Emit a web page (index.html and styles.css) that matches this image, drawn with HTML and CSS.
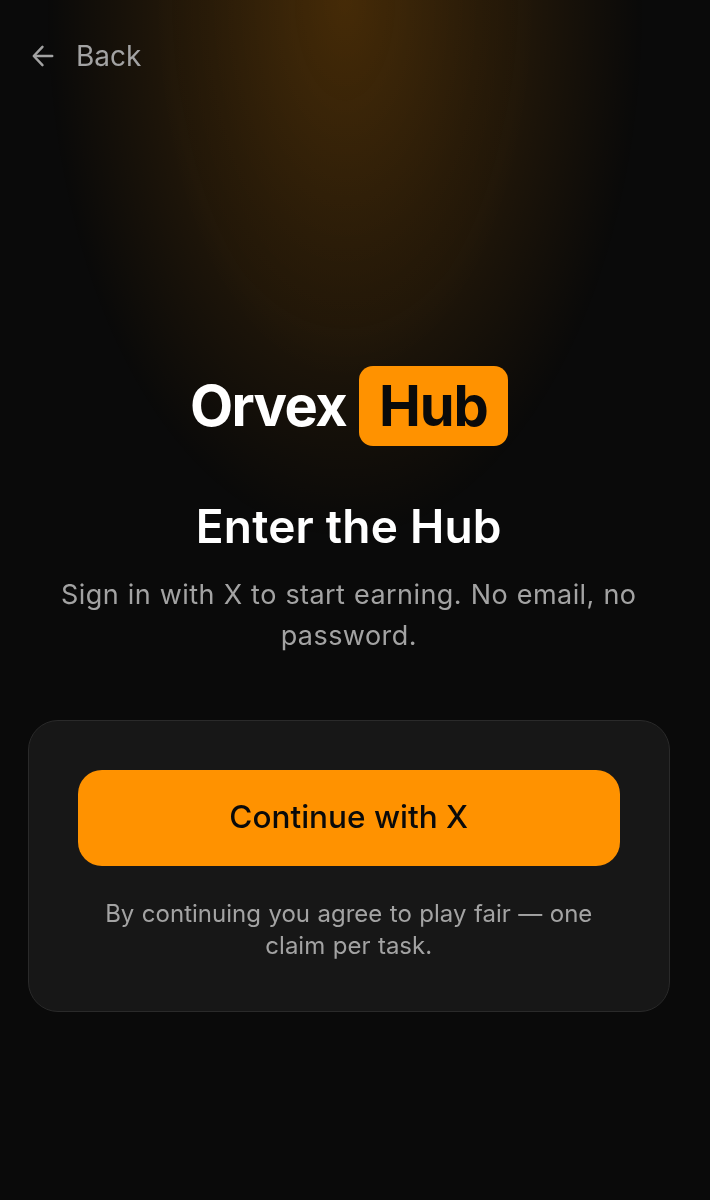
FILE: index.html
```html
<!DOCTYPE html>
<html lang="en">
<head>
<meta charset="utf-8">
<title>Orvex Hub</title>
<link rel="stylesheet" href="styles.css">
</head>
<body>
<main class="page">
  <a class="back" href="#">
    <svg class="back-icon" viewBox="0 0 24 24" width="26" height="26" fill="none" stroke="currentColor" stroke-width="2.300" stroke-linecap="round" stroke-linejoin="round"><path d="M20.500 12H4"/><path d="M11.500 3.500 3.500 12l8 8.500"/></svg>
    <span>Back</span>
  </a>
  <div class="logo">
    <span class="logo-word">Orvex</span>
    <span class="logo-badge">Hub</span>
  </div>
  <h1 class="title">Enter the Hub</h1>
  <p class="subtitle">Sign in with X to start earning. No email, no password.</p>
  <section class="card">
    <button class="cta" type="button">Continue with X</button>
    <p class="note">By continuing you agree to play fair — one claim per task.</p>
  </section>
</main>
</body>
</html>
```
FILE: styles.css
```css
* { box-sizing: border-box; }
html, body { margin: 0; height: 100%; }
body {
  background: #0a0a0a;
  font-family: Inter, "Liberation Sans", sans-serif;
  overflow: hidden;
}
.page {
  height: 1200px;
  padding: 36px 40.500px 0 28px;
  display: flex;
  flex-direction: column;
  will-change: opacity;
  background:
    radial-gradient(ellipse 190px 380px at 345px 0, rgba(255,146,0,.12) 0%, rgba(255,146,0,.03) 70%, rgba(255,146,0,0) 100%),
    radial-gradient(ellipse 300px 540px at 345px 0, rgba(255,146,0,.14) 0%, rgba(255,146,0,.09) 60%, rgba(255,146,0,0) 100%);
}
.back {
  display: flex;
  align-items: center;
  gap: 20px;
  height: 40px;
  color: #a3a3a3;
  font-size: 28px;
  text-decoration: none;
  align-self: flex-start;
  line-height: 42px;
}
.back-icon { flex: none; margin-left: 2px; }
.logo {
  margin-top: 290px;
  display: flex;
  justify-content: center;
  align-items: center;
  gap: 13px;
  font-weight: 700;
  font-size: 56px;
  line-height: 1;
}
.logo-word { color: #fff; letter-spacing: -1.600px; }
.logo-badge {
  background: #ff9200;
  color: #0a0a0a;
  border-radius: 14px;
  height: 80px;
  padding: 0 20px;
  display: flex;
  align-items: center;
  letter-spacing: -1.200px;
}
.title {
  margin: 50px 0 0;
  color: #fff;
  text-align: center;
  font-size: 46px;
  font-weight: 600;
  line-height: 60px;
  letter-spacing: .2px;
}
.subtitle {
  margin: 18px auto 0;
  width: 620px;
  color: #a3a3a3;
  text-align: center;
  font-size: 27px;
  line-height: 41px;
  letter-spacing: .44px;
  word-spacing: .6px;
}
.card {
  margin-top: 64px;
  height: 292px;
  padding: 49px 49px 0;
  background: #171717;
  border: 1.500px solid #2a2a2a;
  border-radius: 30px;
}
.cta {
  display: block;
  width: 100%;
  height: 96px;
  padding: 0 0 4px;
  border: 0;
  border-radius: 24px;
  background: #ff9200;
  color: #0a0a0a;
  font: 500 31.500px Inter, "Liberation Sans", sans-serif;
}
.note {
  margin: 32px auto 0;
  width: 500px;
  color: #a3a3a3;
  text-align: center;
  font-size: 24px;
  line-height: 32px;
  word-spacing: .75px;
}
```
